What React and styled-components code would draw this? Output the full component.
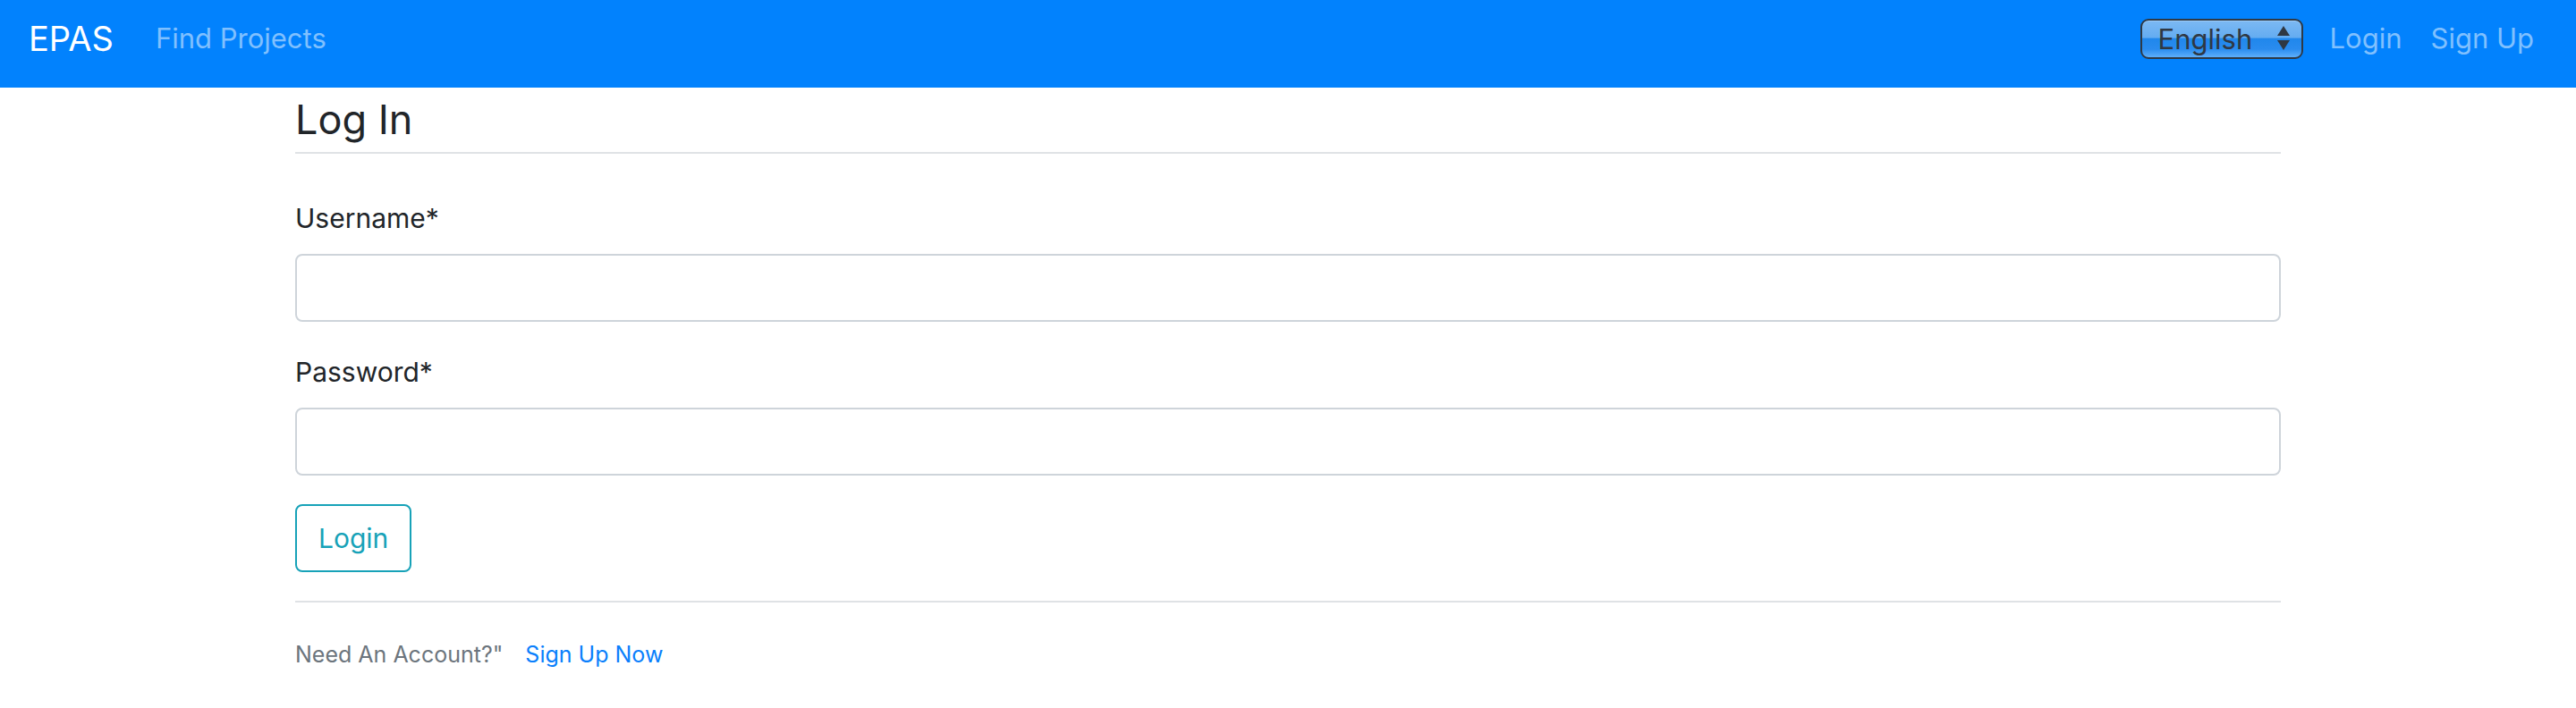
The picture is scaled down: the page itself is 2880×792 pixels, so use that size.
import React, { useState } from 'react';
import styled, { createGlobalStyle } from 'styled-components';

const GlobalStyle = createGlobalStyle`
  html, body {
    margin: 0;
    padding: 0;
    background: #ffffff;
    font-family: Inter, "Liberation Sans", sans-serif;
    color: #212529;
  }
  * {
    box-sizing: border-box;
  }
`;

const Navbar = styled.nav`
  display: flex;
  align-items: center;
  height: 98px;
  padding: 0 31px 12px 32px;
  background: #0282fd;
`;

const Brand = styled.a`
  font-size: 38px;
  line-height: 1.5;
  color: #ffffff;
  text-decoration: none;
  margin-right: 31px;
`;

const NavLink = styled.a`
  font-size: 31px;
  line-height: 1.5;
  padding: 0 16px;
  color: #80c0fe;
  text-decoration: none;
  cursor: pointer;
`;

const NavRight = styled.div`
  display: flex;
  align-items: center;
  margin-left: auto;
`;

const LangSelect = styled.div`
  display: flex;
  align-items: center;
  justify-content: space-between;
  width: 182px;
  height: 45px;
  margin-right: 14px;
  padding: 0 12px 0 18px;
  border: 2px solid #2e3946;
  border-radius: 9px;
  background: linear-gradient(
    to bottom,
    #7cb9f3 0%,
    #64acf1 46%,
    #2087ec 50%,
    #2a8cef 78%,
    #5eaefa 100%
  );
  box-shadow: inset 0 1px 0 rgba(255, 255, 255, 0.25);
  font-size: 31px;
  color: #2f3843;
  cursor: pointer;
`;

const Main = styled.main`
  width: 2220px;
  margin: 0 auto;
  padding-top: 8px;
`;

const Heading = styled.h4`
  margin: 0;
  font-size: 45px;
  font-weight: 400;
  line-height: 56px;
  color: #212529;
`;

const Rule = styled.hr`
  margin: ${(p) => p.$top}px 0 ${(p) => p.$bottom}px 0;
  border: 0;
  border-top: 2px solid #dfe2e5;
`;

const FormGroup = styled.div`
  margin-bottom: 32px;
`;

const Label = styled.label`
  display: block;
  margin-bottom: 16px;
  font-size: 30px;
  line-height: 48px;
  color: #212529;
`;

const Input = styled.input`
  display: block;
  width: 100%;
  height: 76px;
  padding: 12px 24px;
  font-family: inherit;
  font-size: 30px;
  color: #495057;
  background: #ffffff;
  border: 2px solid #ced4da;
  border-radius: 8px;
  outline: none;
`;

const OutlineButton = styled.button`
  height: 76px;
  padding: 0 24px;
  font-family: inherit;
  font-size: 30px;
  line-height: 1.5;
  color: #17a2b8;
  background: transparent;
  border: 2px solid #17a2b8;
  border-radius: 8px;
  cursor: pointer;
`;

const Footer = styled.p`
  margin: 0;
  font-size: 25px;
  line-height: 1.5;
  color: #6c757d;
`;

const FooterLink = styled.a`
  margin-left: 25px;
  color: #0a7ffc;
  text-decoration: none;
`;

function SelectArrows() {
  return (
    <svg width="16" height="30" viewBox="0 0 16 30">
      <path d="M8 1 L15 12 L1 12 Z" fill="#2f3843" />
      <path d="M1 17 L15 17 L8 28 Z" fill="#2f3843" />
    </svg>
  );
}

export default function App() {
  const [username, setUsername] = useState('');
  const [password, setPassword] = useState('');

  return (
    <>
      <GlobalStyle />
      <Navbar>
        <Brand>EPAS</Brand>
        <NavLink>Find Projects</NavLink>
        <NavRight>
          <LangSelect>
            <span>English</span>
            <SelectArrows />
          </LangSelect>
          <NavLink>Login</NavLink>
          <NavLink>Sign Up</NavLink>
        </NavRight>
      </Navbar>

      <Main>
        <Heading>Log In</Heading>
        <Rule $top={8} $bottom={48} />

        <FormGroup>
          <Label>Username*</Label>
          <Input value={username} onChange={(e) => setUsername(e.target.value)} />
        </FormGroup>

        <FormGroup>
          <Label>Password*</Label>
          <Input type="password" value={password} onChange={(e) => setPassword(e.target.value)} />
        </FormGroup>

        <OutlineButton>Login</OutlineButton>

        <Rule $top={32} $bottom={40} />

        <Footer>
          Need An Account?"
          <FooterLink>Sign Up Now</FooterLink>
        </Footer>
      </Main>
    </>
  );
}
